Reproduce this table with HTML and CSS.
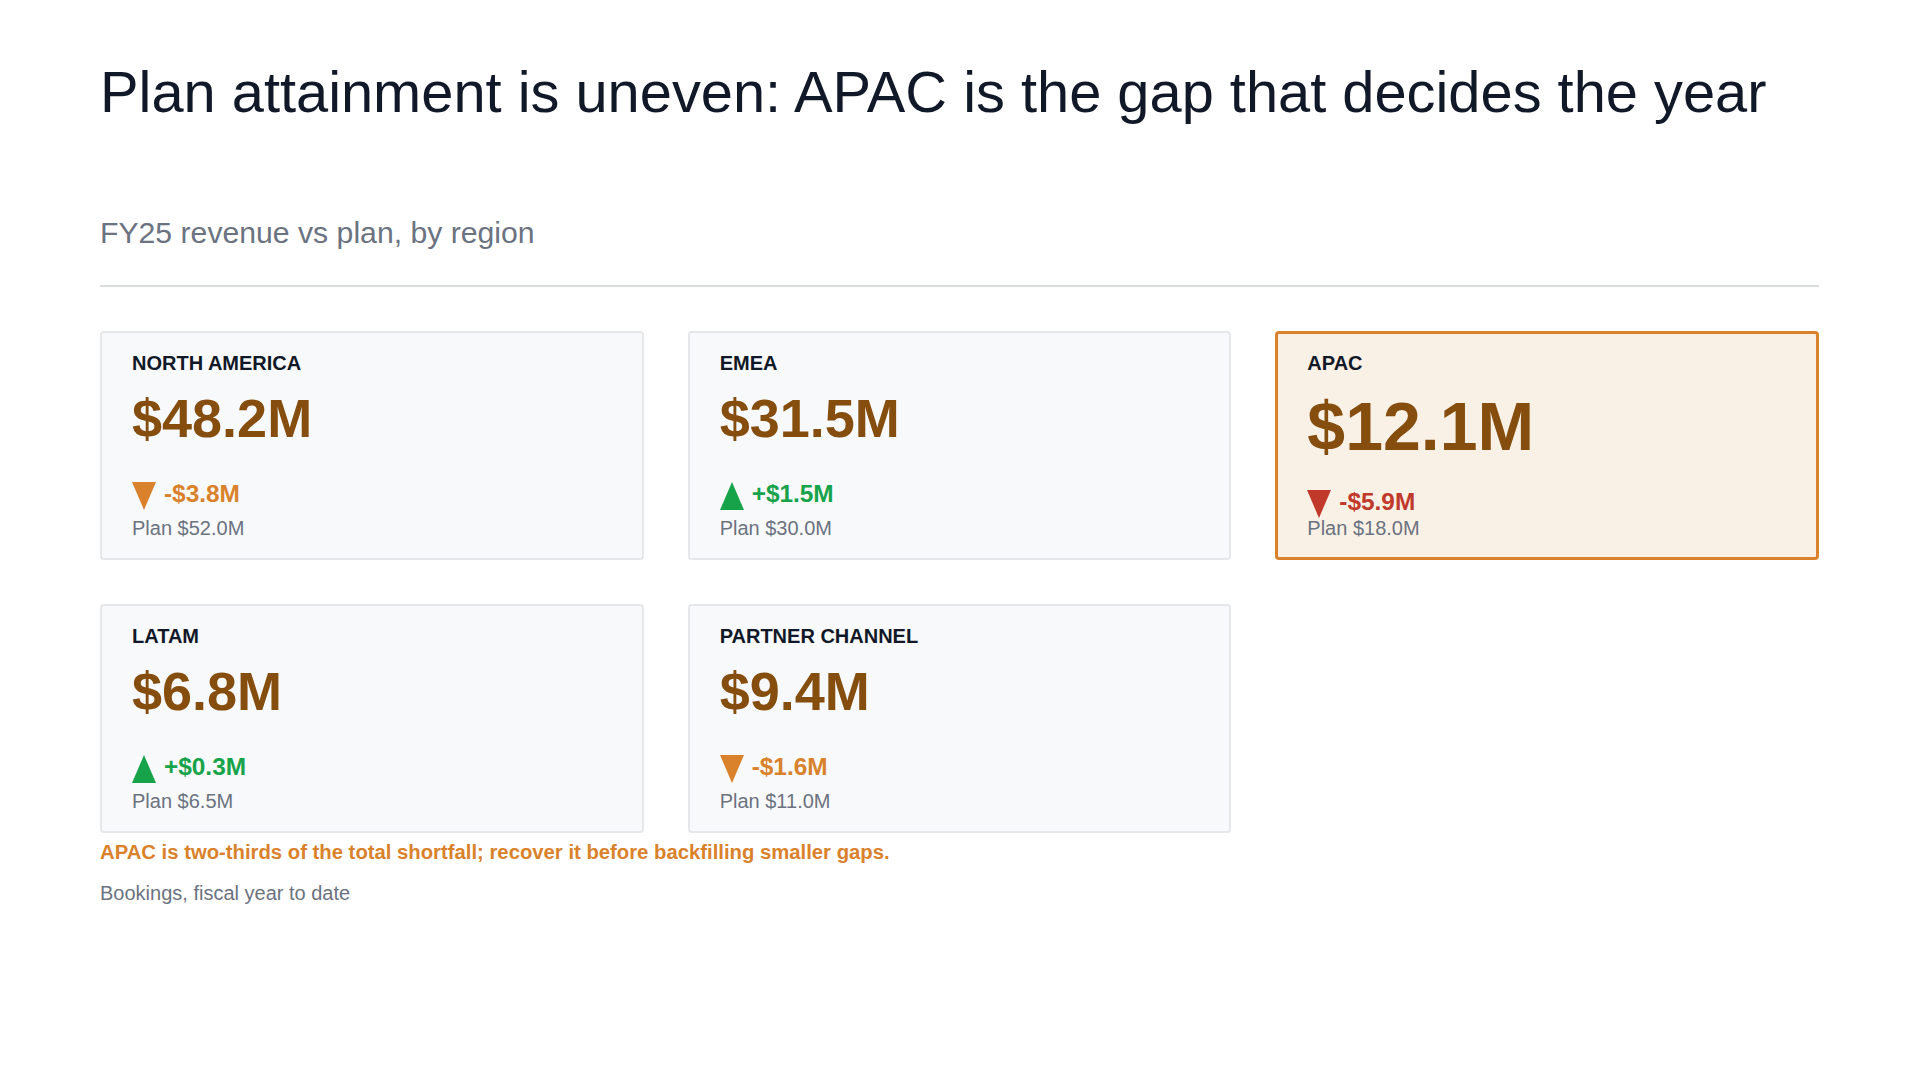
FILE: index.html
```html
<!DOCTYPE html>
<html lang="en">
<head>
<meta charset="utf-8">
<title>FY25 revenue vs plan</title>
<link rel="stylesheet" href="styles.css">
</head>
<body>
<main class="page">
  <h1 class="title">Plan attainment is uneven: APAC is the gap that decides the year</h1>
  <p class="subtitle">FY25 revenue vs plan, by region</p>
  <hr class="rule">
  <section class="grid">
    <article class="card">
      <div class="label">NORTH AMERICA</div>
      <div class="value">$48.2M</div>
      <div class="delta delta-warn">
        <svg class="tri" width="24" height="28" viewBox="0 0 24 28"><polygon points="0,0 24,0 12,28"/></svg>
        <span>-$3.8M</span>
      </div>
      <div class="plan">Plan $52.0M</div>
    </article>
    <article class="card">
      <div class="label">EMEA</div>
      <div class="value">$31.5M</div>
      <div class="delta delta-up">
        <svg class="tri" width="24" height="28" viewBox="0 0 24 28"><polygon points="12,0 24,28 0,28"/></svg>
        <span>+$1.5M</span>
      </div>
      <div class="plan">Plan $30.0M</div>
    </article>
    <article class="card card-focus">
      <div class="label">APAC</div>
      <div class="value">$12.1M</div>
      <div class="delta delta-bad">
        <svg class="tri" width="24" height="28" viewBox="0 0 24 28"><polygon points="0,0 24,0 12,28"/></svg>
        <span>-$5.9M</span>
      </div>
      <div class="plan">Plan $18.0M</div>
    </article>
    <article class="card">
      <div class="label">LATAM</div>
      <div class="value">$6.8M</div>
      <div class="delta delta-up">
        <svg class="tri" width="24" height="28" viewBox="0 0 24 28"><polygon points="12,0 24,28 0,28"/></svg>
        <span>+$0.3M</span>
      </div>
      <div class="plan">Plan $6.5M</div>
    </article>
    <article class="card">
      <div class="label">PARTNER CHANNEL</div>
      <div class="value">$9.4M</div>
      <div class="delta delta-warn">
        <svg class="tri" width="24" height="28" viewBox="0 0 24 28"><polygon points="0,0 24,0 12,28"/></svg>
        <span>-$1.6M</span>
      </div>
      <div class="plan">Plan $11.0M</div>
    </article>
  </section>
  <p class="note">APAC is two-thirds of the total shortfall; recover it before backfilling smaller gaps.</p>
  <p class="source">Bookings, fiscal year to date</p>
</main>
</body>
</html>
```

FILE: styles.css
```css
html, body {
  margin: 0;
  padding: 0;
  background: #ffffff;
}

body {
  font-family: "Liberation Sans", Arial, sans-serif;
  color: #111827;
}

.page {
  padding: 59px 100px 40px;
}

.title {
  margin: 0;
  font-size: 57.8px;
  line-height: 66px;
  font-weight: 400;
  color: #111827;
}

.subtitle {
  margin: 90px 0 0;
  font-size: 30.2px;
  line-height: 35px;
  color: #6b7280;
}

.rule {
  margin: 35px 0 0;
  border: 0;
  height: 2px;
  background: #d9dce1;
}

.grid {
  margin-top: 44px;
  display: grid;
  grid-template-columns: repeat(3, 1fr);
  gap: 44px;
}

.card {
  background: #f8f9fb;
  border: 2px solid #e5e7eb;
  border-radius: 4px;
  padding: 19px 30px 18px;
  display: flex;
  flex-direction: column;
  align-items: flex-start;
}

.card-focus {
  background: #faf1e6;
  border: 3px solid #d9822b;
  padding: 18px 29px 17px;
}

.label {
  font-size: 20px;
  line-height: 23px;
  font-weight: 700;
  color: #111827;
}

.value {
  margin-top: 16px;
  font-size: 54px;
  line-height: 54px;
  font-weight: 700;
  color: #854d0e;
}

.card-focus .value {
  margin-top: 17px;
  font-size: 68px;
  line-height: 68px;
}

.delta {
  margin-top: 35px;
  display: flex;
  align-items: flex-start;
  gap: 8px;
  font-size: 24.4px;
  line-height: 27px;
  font-weight: 700;
}

.card-focus .delta {
  margin-top: 28px;
}

.tri {
  display: block;
  margin-top: 2px;
  fill: currentColor;
}

.delta-warn { color: #d9822b; }
.delta-up { color: #16a34a; }
.delta-bad { color: #c0392b; }

.plan {
  margin-top: 7px;
  font-size: 20px;
  line-height: 23px;
  color: #6b7280;
}

.card-focus .plan {
  margin-top: -1px;
}

.note {
  margin: 8px 0 0;
  font-size: 20.3px;
  line-height: 23px;
  font-weight: 700;
  color: #d9822b;
}

.source {
  margin: 18px 0 0;
  font-size: 20px;
  line-height: 23px;
  color: #6b7280;
}
```
